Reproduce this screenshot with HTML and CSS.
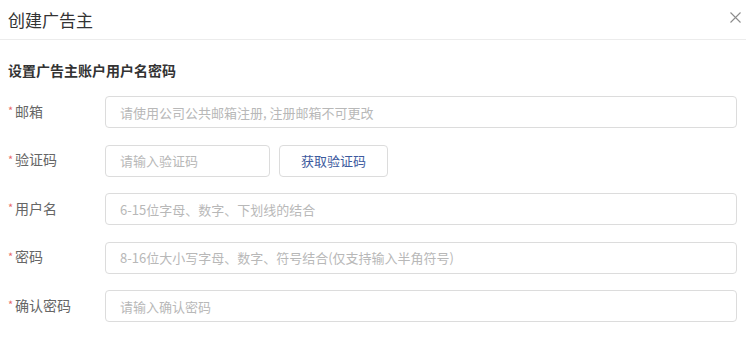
FILE: index.html
```html
<!DOCTYPE html>
<html lang="zh-CN">
<head>
<meta charset="utf-8">
<title>创建广告主</title>
<link rel="stylesheet" href="styles.css">
</head>
<body>
<div class="dialog">
  <div class="header">
    <div class="title">创建广告主</div>
    <button class="close" aria-label="关闭">
      <svg width="11" height="11" viewBox="0 0 11 11"><path d="M0.5 0.5L10.5 10.5M10.5 0.5L0.5 10.5" stroke="#8c8c8c" stroke-width="1.1" fill="none"/></svg>
    </button>
  </div>
  <div class="body">
    <div class="section-title">设置广告主账户用户名密码</div>
    <div class="row">
      <label class="label"><span class="req">*</span>邮箱</label>
      <div class="control"><input class="input" placeholder="请使用公司公共邮箱注册, 注册邮箱不可更改"></div>
    </div>
    <div class="row">
      <label class="label"><span class="req">*</span>验证码</label>
      <div class="control">
        <input class="input short" placeholder="请输入验证码">
        <button class="btn">获取验证码</button>
      </div>
    </div>
    <div class="row">
      <label class="label"><span class="req">*</span>用户名</label>
      <div class="control"><input class="input" placeholder="6-15位字母、数字、下划线的结合"></div>
    </div>
    <div class="row">
      <label class="label"><span class="req">*</span>密码</label>
      <div class="control"><input class="input" placeholder="8-16位大小写字母、数字、符号结合(仅支持输入半角符号)"></div>
    </div>
    <div class="row">
      <label class="label"><span class="req">*</span>确认密码</label>
      <div class="control"><input class="input" placeholder="请输入确认密码"></div>
    </div>
  </div>
</div>
</body>
</html>
```
FILE: styles.css
```css
* { box-sizing: border-box; }
html, body { margin: 0; padding: 0; background: #fff; }
body {
  font-family: "Noto Sans CJK SC", "Noto Sans", "Liberation Sans", sans-serif;
  color: #333;
  width: 746px;
  height: 341px;
  overflow: hidden;
}
.header {
  height: 40px;
  border-bottom: 1px solid #ececec;
  display: flex;
  align-items: center;
  justify-content: space-between;
  padding: 0 4px 0 8px;
}
.title {
  font-size: 17px;
  line-height: 37px;
  color: #333;
}
.close {
  border: none;
  background: none;
  padding: 0;
  width: 11px;
  height: 11px;
  margin-right: 1px;
  margin-bottom: 4px;
  display: flex;
}
.body {
  padding: 20px 9px 0 8px;
}
.section-title {
  font-size: 14px;
  font-weight: bold;
  line-height: 20px;
  color: #333;
  margin-bottom: 16px;
}
.row {
  display: flex;
  align-items: center;
  height: 32px;
  margin-bottom: 16.5px;
}
.label {
  width: 97px;
  flex: none;
  font-size: 14px;
  line-height: 20px;
  height: 20px;
  color: #666;
  display: flex;
  align-items: center;
  margin-top: -3px;
}
.req {
  color: #e86a6a;
  font-size: 11px;
  line-height: 11px;
  width: 7px;
  height: 11px;
  flex: none;
  position: relative;
  top: 0px;
}
.control {
  flex: 1;
  display: flex;
  gap: 9px;
  height: 32px;
}
.input {
  flex: 1;
  height: 32px;
  border: 1px solid #dcdcdc;
  border-radius: 4px;
  padding: 0 14px;
  font-family: inherit;
  font-size: 13px;
  color: #333;
  outline: none;
  background: #fff;
}
.input::placeholder { color: #b8b8b8; }
.input.short { flex: none; width: 165px; }
.btn {
  width: 109px;
  height: 32px;
  border: 1px solid #dcdcdc;
  border-radius: 4px;
  background: #fff;
  color: #3d5a9e;
  font-family: inherit;
  font-size: 13px;
  padding: 0;
}
```
